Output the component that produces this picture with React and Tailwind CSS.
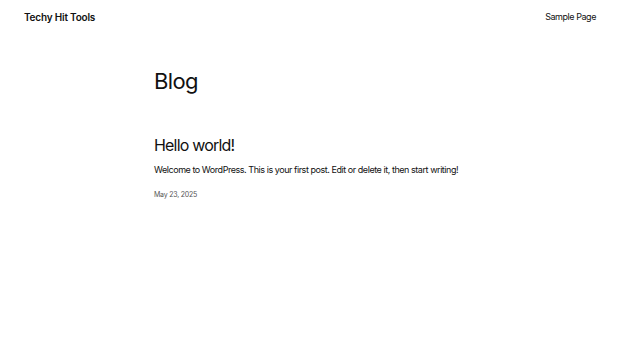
export default function App() {
    return (
        <div
            className="min-h-screen bg-white text-[#111111]"
            style={{ fontFamily: 'Inter, "Noto Sans", sans-serif' }}
        >
            <header className="flex items-center justify-between px-[24px] pt-[10px]">
                <a href="#" className="block text-[10px] font-semibold leading-[14px] tracking-[-0.02em]">
                    Techy Hit Tools
                </a>
                <nav className="flex">
                    <a href="#" className="block text-[9px] leading-[14px] tracking-[-0.05em]">
                        Sample Page
                    </a>
                </nav>
            </header>

            <main className="mx-auto w-[312px] pt-[43px]">
                <h1 className="text-[22px] font-normal leading-[28px] tracking-[-0.03em]">Blog</h1>

                <article className="mt-[39px]">
                    <h2 className="text-[16px] font-normal leading-[22px] tracking-[-0.05em]">
                        <a href="#">Hello world!</a>
                    </h2>
                    <p className="mt-[7px] text-[9px] leading-[14px] tracking-[-0.05em]">
                        Welcome to WordPress. This is your first post. Edit or delete it, then start writing!
                    </p>
                    <div className="mt-[13px] text-[7px] leading-[10px] tracking-[-0.03em] text-[#555555]">
                        May 23, 2025
                    </div>
                </article>
            </main>
        </div>
    );
}
